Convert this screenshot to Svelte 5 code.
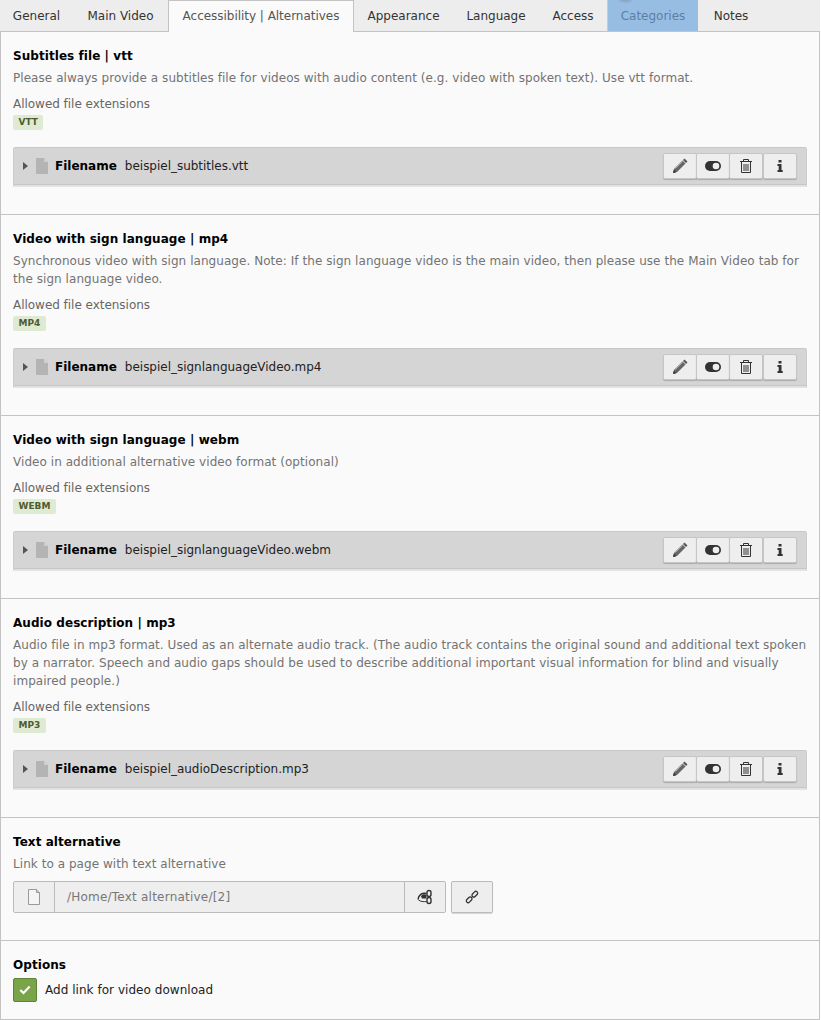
<script>
  const tabs = [
    { label: 'General', w: 73 },
    { label: 'Main Video', w: 95 },
    { label: 'Accessibility | Alternatives', w: 186, active: true },
    { label: 'Appearance', w: 99 },
    { label: 'Language', w: 86 },
    { label: 'Access', w: 68 },
    { label: 'Categories', w: 91, hl: true },
    { label: 'Notes', w: 66 }
  ];
  const files = [
    { title: 'Subtitles file | vtt', desc: ['Please always provide a subtitles file for videos with audio content (e.g. video with spoken text). Use vtt format.'], tag: 'VTT', file: 'beispiel_subtitles.vtt' },
    { title: 'Video with sign language | mp4', desc: ['Synchronous video with sign language. Note: If the sign language video is the main video, then please use the Main Video tab for', 'the sign language video.'], tag: 'MP4', file: 'beispiel_signlanguageVideo.mp4' },
    { title: 'Video with sign language | webm', desc: ['Video in additional alternative video format (optional)'], tag: 'WEBM', file: 'beispiel_signlanguageVideo.webm', },
    { title: 'Audio description | mp3', desc: ['Audio file in mp3 format. Used as an alternate audio track. (The audio track contains the original sound and additional text spoken', 'by a narrator. Speech and audio gaps should be used to describe additional important visual information for blind and visually', 'impaired people.)'], tag: 'MP3', file: 'beispiel_audioDescription.mp3' }
  ];
</script>

<div class="page">
  <nav class="tabs">
    {#each tabs as t}
      <div class="tab" class:active={t.active} class:hl={t.hl} style="width:{t.w}px">{t.label}</div>
    {/each}
    <div class="tabfill"></div>
  </nav>
  <main class="panel">
    {#each files as f}
      <section class="sec">
        <h3>{f.title}</h3>
        <div class="desc">
          {#each f.desc as line}<div>{line}</div>{/each}
        </div>
        <div class="allowed">Allowed file extensions</div>
        <div class="tagrow"><span class="tag">{f.tag}</span></div>
        <div class="bar">
          <svg class="caret" width="5" height="8" viewBox="0 0 5 8"><path d="M0 0l5 4-5 4z" fill="#555"/></svg>
          <svg class="fileicon" width="12" height="16" viewBox="0 0 12 16"><path d="M0 0h8l4 4v12H0z" fill="#b4b4b4"/><path d="M8 0l4 4H8z" fill="#d0d0d0"/></svg>
          <b class="fname">Filename</b>
          <span class="fval">{f.file}</span>
          <div class="btns">
            <button class="btn" aria-label="edit">
              <svg width="16" height="16" viewBox="0 0 16 16"><path d="M1 15l1-4 8.500-8.500 3 3L5 14z" fill="#666"/><path d="M11 2l1.500-1.500 3 3L14 5z" fill="#555"/><path d="M1 15l.8-3.200 2.400 2.400z" fill="#333"/><path d="M3.500 10.500l7-7" stroke="#bbb" stroke-width=".8"/></svg>
            </button>
            <button class="btn" aria-label="toggle">
              <svg width="16" height="16" viewBox="0 0 16 16"><rect x="0" y="3" width="16" height="10" rx="5" fill="#333"/><circle cx="11" cy="8" r="3.300" fill="#eee"/></svg>
            </button>
            <button class="btn" aria-label="delete">
              <svg width="16" height="16" viewBox="0 0 16 16" fill="none" stroke="#333"><path d="M2 3.500h12M5.500 3.500v-2h5v2M3.500 3.500v11h9v-11M6 6v7M8 6v7M10 6v7"/></svg>
            </button>
            <button class="btn" aria-label="info">
              <svg width="16" height="16" viewBox="0 0 16 16"><path d="M6.500 2h3v2.500h-3zM5.500 6h4v6h1.200v2H5.500v-2h1.200V8H5.500z" fill="#333"/></svg>
            </button>
          </div>
        </div>
      </section>
    {/each}

    <section class="sec link">
      <h3>Text alternative</h3>
      <div class="desc"><div>Link to a page with text alternative</div></div>
      <div class="linkrow">
        <div class="group">
          <div class="addon first">
            <svg width="14" height="16" viewBox="0 0 14 16" fill="#f4f4f4" stroke="#999"><path d="M1.500.500h8l3 3v12h-11z"/><path d="M9.500.500v3h3" fill="#ccc"/></svg>
          </div>
          <div class="path">/Home/Text alternative/[2]</div>
          <div class="addon end" aria-label="unlink">
            <svg width="16" height="16" viewBox="0 0 16 16"><path d="M1 10.500C1.500 6 5 3.500 9.500 4.500" fill="none" stroke="#333" stroke-width="1.500"/><path d="M4 7.500A3.500 3.500 0 0 1 9.500 6v3.500H5z" fill="#333"/><path d="M1.500 11c2 1.500 5 2 8 1.500" fill="none" stroke="#333" stroke-width="1"/><g fill="none" stroke="#333" stroke-width="1.400"><rect x="10" y="1.500" width="4" height="6" rx="2"/><rect x="10" y="8.500" width="4" height="6" rx="2"/></g></svg>
          </div>
        </div>
        <button class="linkbtn" aria-label="link">
          <svg width="14" height="14" viewBox="0 0 14 14" fill="none" stroke="#333" stroke-width="1.300"><rect x="-3" y="-1.800" width="6.500" height="3.600" rx="1.800" transform="translate(4 10) rotate(-45)"/><rect x="-3.500" y="-1.800" width="6.500" height="3.600" rx="1.800" transform="translate(10 4) rotate(-45)"/></svg>
        </button>
      </div>
    </section>

    <section class="sec opts">
      <h3>Options</h3>
      <div class="check">
        <span class="box"><svg width="12" height="10" viewBox="0 0 12 10"><path d="M1.300 5l3.200 3L10.700 1.500" fill="none" stroke="#fff" stroke-width="2.200"/></svg></span>
        <span class="chk">Add link for video download</span>
      </div>
    </section>
  </main>
</div>

<style>
  :global(body) { margin: 0; background: #fff; }
  .page { width: 820px; font: 12px/18px "DejaVu Sans", Verdana, sans-serif; color: #333; }
  .tabs { display: flex; height: 32px; background: #ededed; box-sizing: border-box; border-bottom: 1px solid #c3c3c3; }
  .tab { box-sizing: border-box; height: 31px; line-height: 32px; text-align: center; color: #333; flex: none; }
  .tab.active { background: #fafafa; height: 32px; border: 1px solid #c3c3c3; border-bottom: 0; color: #555; position: relative; line-height: 30px; letter-spacing: -.03px; }
  .tab.hl { background: #98bde2; color: #5e7fa5; border-left: 1px solid #e5c79f; position: relative; overflow: hidden; }
  .tab.hl::before { content: ""; position: absolute; left: 10px; top: -6px; width: 15px; height: 8px; border-radius: 50%; background: #8aa3bf; filter: blur(1px); }
  .tabfill { flex: 1; }
  .panel { background: #fafafa; border: 1px solid #c3c3c3; border-top: 0; box-sizing: border-box; }
  .sec { padding: 15px 12px 0; border-bottom: 1px solid #c3c3c3; box-sizing: border-box; }
  h3 { margin: 0; font-size: 12px; line-height: 18px; font-weight: 700; color: #000; letter-spacing: .06px; }
  .desc { margin-top: 4px; color: #737373; letter-spacing: .053px; }
  .allowed { margin-top: 8px; color: #666; letter-spacing: -.03px; }
  .tagrow { height: 18px; line-height: 0; padding-top: 2px; box-sizing: border-box; }
  .tag { display: inline-block; height: 15px; line-height: 15px; padding: 0 5.500px; font-size: 9px; font-weight: 700; color: #4f5a30; background: #dfead2; border-radius: 2px; }
  .bar { display: flex; align-items: center; height: 40px; margin: 16px 0 27px; padding: 0 9px 1px 9px; background: #d5d5d5; border: 1px solid #cdcdcd; border-top-color: #c8c8c8; border-bottom: 2px solid #e2e2e2; border-radius: 2px 2px 0 0; box-sizing: border-box; box-shadow: inset 0 -1px 0 #c6c6c6; }
  .caret { margin-right: 8px; }
  .fileicon { margin-right: 7px; }
  .fname { color: #000; margin-right: 8px; }
  .fval { color: #222; letter-spacing: -.02px; }
  .btns { margin-left: auto; display: flex; }
  .btn { box-sizing: border-box; width: 34px; height: 26px; padding: 0; display: flex; align-items: center; justify-content: center; background: #eee; border: 1px solid #c6c6c6; border-radius: 2px; box-shadow: 0 1px 1px rgba(0,0,0,.2); margin-left: -1px; }
  .btn:first-child, .btn:last-child { margin-left: 0; }
  .link { height: 123px; }
  .linkrow { display: flex; margin-top: 8px; }
  .group { width: 433px; height: 32px; display: flex; box-sizing: border-box; border: 1px solid #bbb; border-radius: 2px; background: #eee; }
  .addon { width: 40px; display: flex; align-items: center; justify-content: center; flex: none; }
  .addon.end { border-left: 1px solid #bbb; }
  .path { flex: 1; border-left: 1px solid #bbb; padding-left: 12px; line-height: 30px; color: #777; letter-spacing: .22px; }
  .linkbtn { margin-left: 5px; width: 42px; height: 32px; padding: 0; display: flex; align-items: center; justify-content: center; background: #eee; border: 1px solid #bbb; border-radius: 2px; box-shadow: 0 1px 1px rgba(0,0,0,.15); }
  .opts { height: 79px; }
  .check { display: flex; align-items: center; gap: 8px; margin-top: 4px; color: #222; }
  .chk { letter-spacing: .04px; }
  .box { width: 24px; height: 24px; box-sizing: border-box; background: #79a548; border: 1px solid #5d8238; border-radius: 2px; display: flex; align-items: center; justify-content: center; }
</style>
